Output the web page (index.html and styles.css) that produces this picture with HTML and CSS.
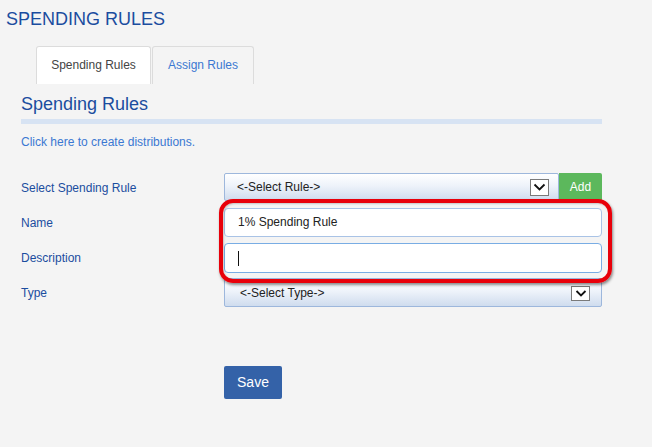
FILE: index.html
```html
<!DOCTYPE html>
<html>
<head>
<meta charset="utf-8">
<link rel="stylesheet" href="styles.css">
</head>
<body>
<h1 class="page-title">SPENDING RULES</h1>
<div class="tabs">
  <div class="tab tab-active">Spending Rules</div>
  <div class="tab">Assign Rules</div>
</div>
<div class="content">
  <h2 class="section-title">Spending Rules</h2>
  <div class="section-bar"></div>
  <a class="link">Click here to create distributions.</a>
  <div class="form">
    <div class="row">
      <label class="label">Select Spending Rule</label>
      <div class="control control-split">
        <div class="select select-rule">
          <span>&lt;-Select Rule-&gt;</span>
          <span class="arrow arrow-rule"><svg width="13" height="8" viewBox="0 0 13 8"><path d="M1.5 1.5 L6.5 6.5 L11.5 1.5" fill="none" stroke="#111" stroke-width="1.8"/></svg></span>
        </div>
        <div class="btn-add">Add</div>
      </div>
    </div>
    <div class="row">
      <label class="label">Name</label>
      <div class="control"><div class="input">1% Spending Rule</div></div>
    </div>
    <div class="row">
      <label class="label">Description</label>
      <div class="control"><div class="input input-focus"><span class="caret"></span></div></div>
    </div>
    <div class="row">
      <label class="label">Type</label>
      <div class="control">
        <div class="select select-type">
          <span>&lt;-Select Type-&gt;</span>
          <span class="arrow arrow-type"><svg width="12" height="7" viewBox="0 0 12 7"><path d="M1.5 1 L6 5.5 L10.5 1" fill="none" stroke="#111" stroke-width="1.8"/></svg></span>
        </div>
      </div>
    </div>
    <div class="save-row">
      <div class="btn-save">Save</div>
    </div>
  </div>
  <div class="highlight"></div>
</div>
</body>
</html>
```

FILE: styles.css
```css
html, body {
  margin: 0;
  padding: 0;
  background: #f4f4f4;
  font-family: Arial, "Liberation Sans", sans-serif;
  width: 652px;
  height: 447px;
  overflow: hidden;
}
.page-title {
  margin: 9px 0 0 6px;
  font-size: 18px;
  line-height: 21px;
  font-weight: normal;
  color: #1b4d9f;
}
.tabs {
  display: flex;
  margin: 16px 0 0 36px;
  height: 38px;
}
.tab {
  box-sizing: border-box;
  height: 38px;
  border: 1px solid #dcdcdc;
  border-bottom: none;
  border-radius: 3px 3px 0 0;
  font-size: 12px;
  line-height: 37px;
  color: #3b78d2;
  text-align: center;
  width: 102px;
  margin-right: 1px;
}
.tab-active {
  background: #fff;
  color: #444;
  width: 115px;
}
.content {
  position: relative;
  margin-left: 21px;
  width: 581px;
}
.section-title {
  margin: 10px 0 0 0;
  font-size: 18px;
  line-height: 21px;
  font-weight: normal;
  color: #1b4d9f;
}
.section-bar {
  height: 5px;
  background: #d7e3f3;
  margin-top: 4px;
}
.link {
  display: block;
  margin-top: 11px;
  font-size: 12px;
  line-height: 14px;
  color: #3b78d2;
}
.form {
  margin-top: 24px;
  display: flex;
  flex-direction: column;
  gap: 6px;
}
.row {
  display: flex;
  align-items: center;
  height: 29px;
}
.label {
  width: 203px;
  font-size: 12px;
  color: #1b4d9f;
}
.control {
  width: 378px;
  height: 29px;
  display: flex;
}
.select {
  box-sizing: border-box;
  height: 29px;
  border: 1px solid #9db7dc;
  border-radius: 2px;
  background: linear-gradient(#ffffff 0%, #eef3fa 45%, #cfdcee 100%);
  display: flex;
  align-items: center;
  justify-content: space-between;
  font-size: 12px;
  color: #222;
}
.select-rule {
  width: 335px;
  height: 28px;
  padding: 0 9px 0 12px;
}
.select-type {
  width: 378px;
  padding: 0 11px 0 15px;
}
.arrow {
  box-sizing: border-box;
  display: flex;
  align-items: center;
  justify-content: center;
  background: #fff;
  border: 1px solid #7a7a7a;
}
.arrow-rule {
  width: 19px;
  height: 17px;
}
.arrow-type {
  width: 19px;
  height: 15px;
  margin-top: 1px;
}
.btn-add {
  width: 43px;
  height: 29px;
  background: #5cb85c;
  color: #fff;
  font-size: 12px;
  line-height: 29px;
  text-align: center;
  border-radius: 0 2px 2px 0;
}
.input {
  box-sizing: border-box;
  width: 378px;
  height: 29px;
  background: #fff;
  border: 1px solid #a9c3e6;
  border-radius: 4px;
  padding-left: 13px;
  font-size: 12px;
  line-height: 27px;
  color: #222;
  display: flex;
  align-items: center;
}
.input-focus {
  height: 30px;
  border-color: #79ade4;
}
.caret {
  width: 1px;
  height: 15px;
  background: #111;
}
.save-row {
  padding-left: 203px;
  margin-top: 53px;
}
.btn-save {
  width: 58px;
  height: 33px;
  background: #3462a8;
  color: #fff;
  font-size: 14px;
  line-height: 33px;
  text-align: center;
  border-radius: 2px;
}
.highlight {
  position: absolute;
  left: 198px;
  top: 105px;
  width: 385px;
  height: 76px;
  border: 4px solid #e8000a;
  border-radius: 14px;
  box-shadow: 1px 2px 3px rgba(0, 0, 0, 0.45), inset 1px 1px 2px rgba(0, 0, 0, 0.2);
  pointer-events: none;
}
```
